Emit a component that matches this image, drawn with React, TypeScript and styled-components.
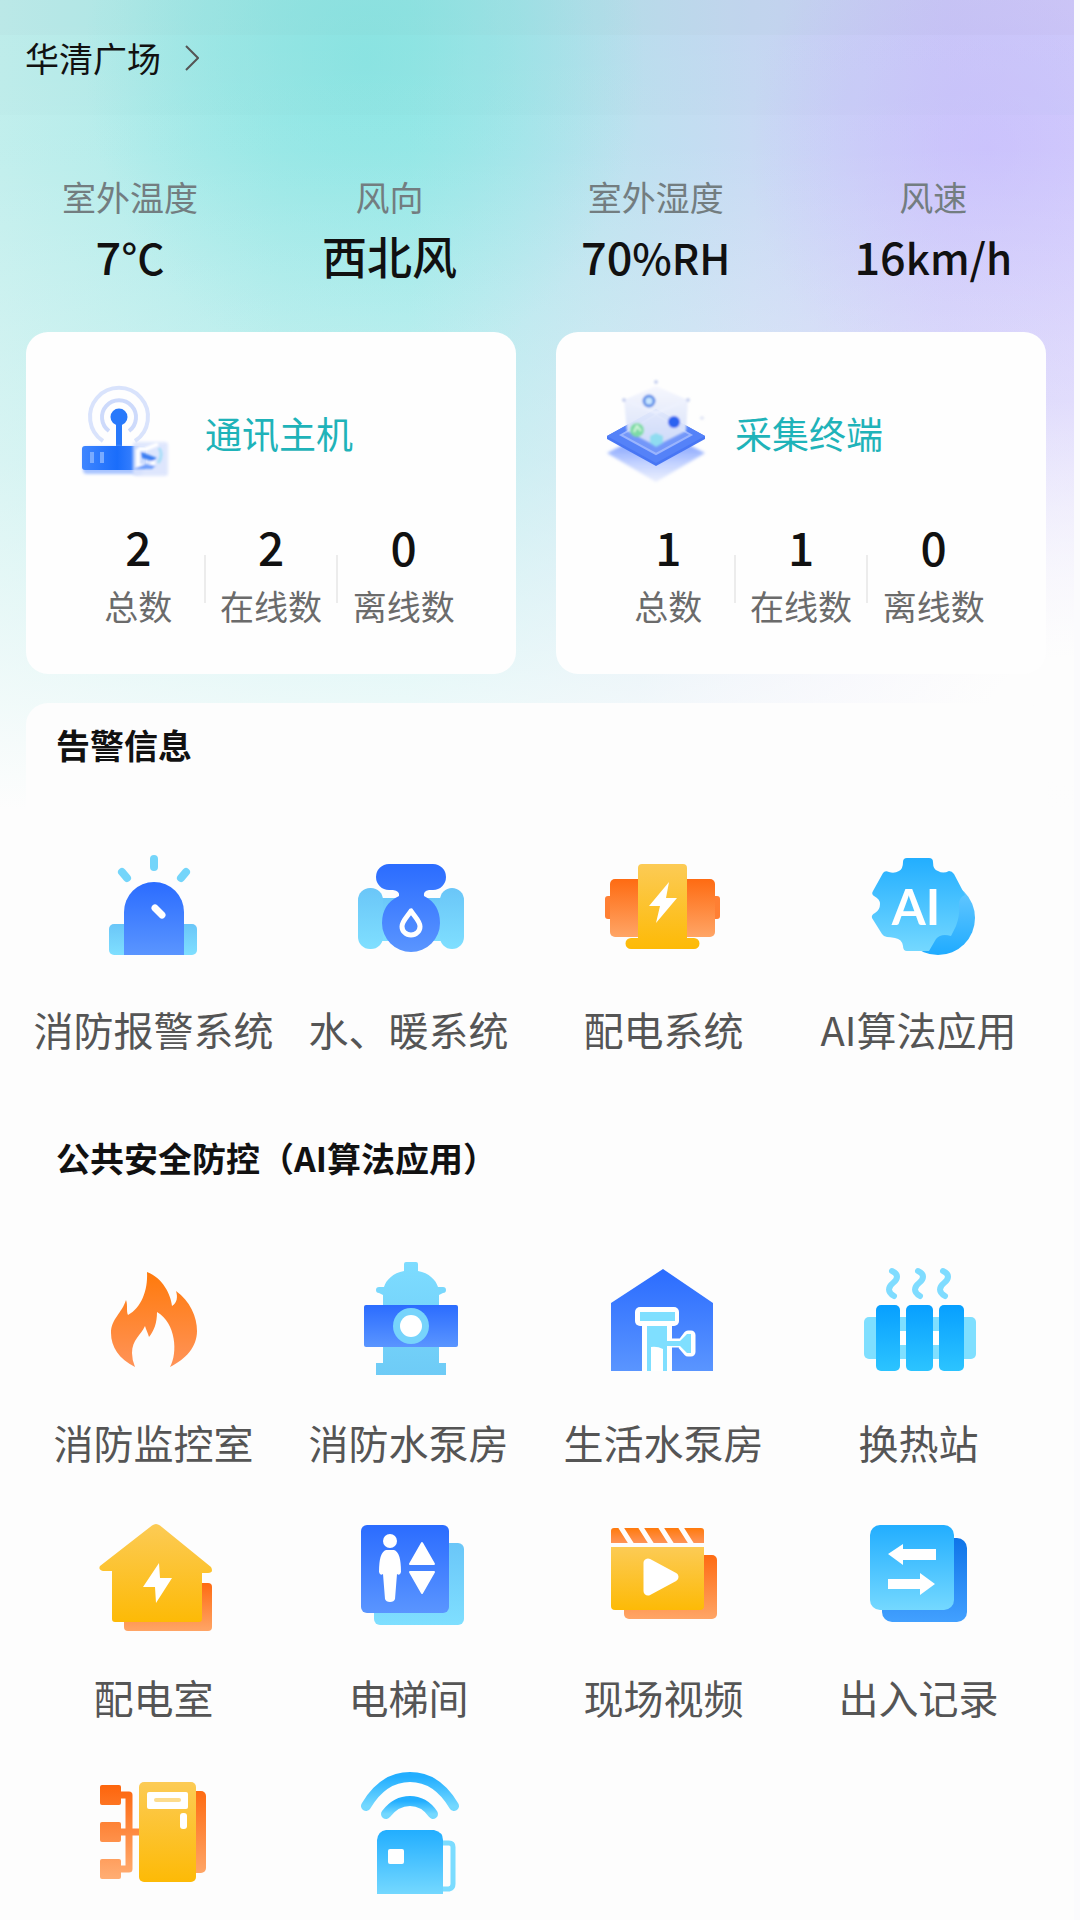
import React from "react";
import styled, { createGlobalStyle } from "styled-components";

const GlobalStyle = createGlobalStyle`
  * { box-sizing: border-box; }
  body {
    margin: 0;
    background: #fdfdfd;
    font-family: "Noto Sans CJK SC", "Noto Sans", sans-serif;
    color: #111;
  }
  button {
    font: inherit;
    color: inherit;
    background: none;
    border: 0;
    padding: 0;
    cursor: pointer;
  }
  h1, h2, p, dl, dd { margin: 0; }
`;

const Page = styled.div`
  min-height: 100vh;
  border-right: 6px solid #fbfbfd;
  background:
    linear-gradient(
      180deg,
      rgba(253, 253, 253, 0) 0,
      rgba(253, 253, 253, 0.04) 150px,
      rgba(253, 253, 253, 0.24) 320px,
      rgba(253, 253, 253, 0.4) 460px,
      rgba(253, 253, 253, 0.64) 600px,
      rgba(253, 253, 253, 0.8) 700px,
      #fdfdfd 810px
    ),
    radial-gradient(440px 320px at 100% 720px, #fdfdfd 20%, rgba(253, 253, 253, 0) 100%),
    radial-gradient(280px 320px at 34% 60px, rgba(132, 228, 226, 0.8), rgba(132, 228, 226, 0) 100%),
    radial-gradient(240px 260px at 92% 150px, rgba(198, 188, 253, 0.7), rgba(198, 188, 253, 0) 100%),
    linear-gradient(90deg, #bfeeec 0, #a4e9e8 26%, #a0e9e9 38%, #b9e1ee 56%, #c6d9f3 70%, #cdcbf9 88%, #d3ccfc 100%);
  background-color: #fdfdfd;
  background-repeat: no-repeat;
  overflow: hidden;
`;

const StatusStrip = styled.div`
  height: 35px;
  background: rgba(120, 130, 140, 0.05);
`;

const Header = styled.header`
  padding: 0 25px 34px;
  background: rgba(120, 130, 140, 0.02);
`;

const PlaceButton = styled.button`
  display: flex;
  align-items: center;
  gap: 24px;
  font-size: 34px;
  line-height: 46px;
`;

const Weather = styled.dl`
  display: flex;
  justify-content: space-around;
  padding: 57px 0 42px;
`;

const WeatherItem = styled.div`
  text-align: center;
`;

const WeatherLabel = styled.dt`
  font-size: 34px;
  line-height: 50px;
  color: #737d80;
`;

const WeatherValue = styled.dd`
  font-size: 45px;
  font-weight: 500;
  line-height: 68px;
`;

const Unit = styled.span`
  font-size: 42px;
  line-height: 1;
`;

const Main = styled.main`
  padding: 0 28px 0 26px;
`;

const Cards = styled.div`
  display: grid;
  grid-template-columns: 1fr 1fr;
  gap: 40px;
  margin-bottom: 29px;
`;

const Card = styled.section`
  padding: 46px 46px 43px;
  border-radius: 22px;
  background: #fefefe;
`;

const CardHead = styled.div`
  display: flex;
  align-items: center;
  gap: 23px;
  margin-bottom: 26px;
`;

const CardTitle = styled.h2`
  font-size: 37px;
  font-weight: 400;
  line-height: 50px;
  color: #1fb3b9;
`;

const Stats = styled.dl`
  display: flex;
`;

const Stat = styled.div`
  flex: 1 1 0;
  display: flex;
  flex-direction: column-reverse;
  gap: 3px;
  text-align: center;
  white-space: nowrap;
`;

const StatDivider = styled.span`
  width: 2px;
  height: 48px;
  margin: 41px -1px 0;
  background: #ececec;
`;

const StatLabel = styled.dt`
  font-size: 34px;
  line-height: 50px;
  color: #6b6b6b;
`;

const StatValue = styled.dd`
  font-size: 46px;
  font-weight: 500;
  line-height: 64px;
`;

const Panel = styled.div`
  padding-top: 17px;
  border-radius: 22px;
  background: #fdfdfd;
`;

const Group = styled.section`
  margin-bottom: 76px;
`;

const GroupTitle = styled.h2`
  padding: 0 30px;
  margin-bottom: 72px;
  font-size: 34px;
  font-weight: 700;
  line-height: 50px;
`;

const Tiles = styled.div`
  display: grid;
  grid-template-columns: repeat(4, 1fr);
  row-gap: 40px;
`;

const Tile = styled.button`
  display: flex;
  flex-direction: column;
  align-items: center;
  gap: 27px;
  min-width: 0;
  white-space: nowrap;
`;

const TileLabel = styled.span`
  font-size: 40px;
  line-height: 56px;
  color: #555;
`;

const Drawing = styled.svg<{ $size: number }>`
  display: block;
  flex: none;
  width: ${(p) => p.$size}px;
  height: ${(p) => p.$size}px;
`;

const HiddenDefs = styled.svg`
  display: block;
  width: 0;
  height: 0;
`;

const gradients: [string, string, string][] = [
  ["blue", "#2b6cff", "#5a95ff"],
  ["cyan", "#6ac6f8", "#7fdfff"],
  ["aqua", "#7ddcff", "#6ecbf6"],
  ["amber", "#fccb55", "#fdba06"],
  ["orange", "#fe6b12", "#ffa566"],
  ["flame", "#ff7a0c", "#ff9358"],
  ["sky", "#22aeff", "#74d8ff"],
  ["orb", "#6dcbff", "#1fabff"],
  ["azure", "#079fff", "#2cc4ff"],
  ["deep", "#0f74e8", "#42a0ff"],
];

const Gradients = () => (
  <HiddenDefs aria-hidden="true">
    <defs>
      {gradients.map(([id, from, to]) => (
        <linearGradient key={id} id={id} x1="0" y1="0" x2="0" y2="1">
          <stop offset="0" stopColor={from} />
          <stop offset="1" stopColor={to} />
        </linearGradient>
      ))}
      <linearGradient id="router" x1="0" y1="0" x2="1" y2="0">
        <stop offset="0" stopColor="#3f86ff" />
        <stop offset="0.55" stopColor="#1a6dfb" />
        <stop offset="1" stopColor="#4d8dff" />
      </linearGradient>
      <linearGradient id="shade" x1="0" y1="0" x2="0" y2="1">
        <stop offset="0.4" stopColor="#7fa0ff" stopOpacity="0.8" />
        <stop offset="1" stopColor="#b9caff" stopOpacity="0.3" />
      </linearGradient>
      <linearGradient id="glass" x1="0" y1="0" x2="0" y2="1">
        <stop offset="0" stopColor="#f6f7fe" />
        <stop offset="1" stopColor="#d3def9" />
      </linearGradient>
      <linearGradient id="ladder" gradientUnits="userSpaceOnUse" x1="0" y1="20" x2="0" y2="114">
        <stop offset="0" stopColor="#fd650c" />
        <stop offset="1" stopColor="#ffae74" />
      </linearGradient>
      <filter id="soft" x="-20%" y="-20%" width="140%" height="140%">
        <feGaussianBlur stdDeviation="1.5" />
      </filter>
      <filter id="haze" x="-20%" y="-20%" width="140%" height="140%">
        <feGaussianBlur stdDeviation="0.8" />
      </filter>
    </defs>
  </HiddenDefs>
);

const Icon = ({ children }: { children: React.ReactNode }) => (
  <Drawing $size={132} viewBox="0 0 132 132" aria-hidden="true">
    {children}
  </Drawing>
);

const AlarmIcon = () => (
  <Icon>
    <g stroke="#74d5fa" strokeWidth="8" strokeLinecap="round">
      <path d="M66 17V25M34 30L39 36M98 30L93 36" />
    </g>
    <rect x="21" y="82" width="88" height="31" rx="5" fill="url(#cyan)" />
    <path d="M36 113V70a30 30 0 0 1 60 0V113z" fill="url(#blue)" />
    <path d="M67 66L74 73" stroke="#fff" strokeWidth="7" strokeLinecap="round" />
  </Icon>
);

const ValveIcon = () => (
  <Icon>
    <rect x="38" y="55" width="60" height="44" fill="url(#cyan)" />
    <path d="M38 50l20-4h20l20 4v6H80L68 52l-12 4H38z" fill="#fdfdfd" />
    <rect x="15" y="46" width="25" height="61" rx="12" fill="url(#cyan)" />
    <rect x="97" y="46" width="24" height="61" rx="12" fill="url(#cyan)" />
    <path
      d="M46 22H90a13 13 0 0 1 0 26H86Q80 49 81 54Q97 62 97 81a29 29 0 0 1-58 0Q39 62 56 54Q57 49 50 48H46a13 13 0 0 1 0-26z"
      fill="url(#blue)"
    />
    <path d="M68 69c-3 5-9 10-9 15.500a9 8.500 0 0 0 18 0c0-5.500-6-10.500-9-15.500z" fill="none" stroke="#fff" strokeWidth="5" strokeLinejoin="round" />
  </Icon>
);

const MotorIcon = () => (
  <Icon>
    <rect x="7" y="54" width="115" height="23" rx="3" fill="#ff7f33" />
    <rect x="12" y="37" width="105" height="58" rx="5" fill="url(#orange)" />
    <path d="M44 22H85a4 4 0 0 1 4 4V96H96a5.500 5.500 0 0 1 0 11H33a5.500 5.500 0 0 1 0-11H40V26a4 4 0 0 1 4-4z" fill="url(#amber)" />
    <path d="M71 40L51 64H62L58 81L79 56H68Z" fill="#fff" />
  </Icon>
);

const AiIcon = () => (
  <Icon>
    <circle cx="85" cy="76" r="37" fill="url(#orb)" />
    <path
      d="M54 16H76Q80 16 80 20Q80 28 85 29Q90 32 96 29Q99 29 101 32L112 53Q105 56 106 64Q107 73 103 84L98 94Q88 91 83 97L76 109H54Q50 109 50 104Q49 97 42 96Q37 95 34 95Q31 95 29 92L19 76Q18 73 22 71Q27 68 27 62Q27 57 21 54Q18 52 20 49L30 31Q32 28 36 30Q41 32 46 29Q50 27 50 20Q50 16 54 16Z"
      fill="url(#sky)"
    />
    <text x="63" y="83" textAnchor="middle" fontFamily="Lato, sans-serif" fontWeight="700" fontSize="49" fill="#fff">
      AI
    </text>
  </Icon>
);

const FlameIcon = () => (
  <Icon>
    <path
      d="M59 17C75 23 83 40 84 51C89 48 90 42 88 36C102 46 109 62 109 76C109 92 98 104 82 112C90 98 88 68 69 57C69 68 66 76 61 82C60 78 58 75 57 71C53 80 44 85 44 98Q44 105 47 112C31 104 23 92 23 78C23 64 34 58 38 45C40 50 38 56 40 60C53 53 60 36 59 17Z"
      fill="url(#flame)"
    />
  </Icon>
);

const HydrantIcon = () => (
  <Icon>
    <path
      d="M63 7H73a2 2 0 0 1 2 2V16C86 18 93 25 95 32H100a3 3 0 0 1 0 6L96 40V108H103V120H33V108H40V40L36 38a3 3 0 0 1 0-6H41C43 25 50 18 61 16V9a2 2 0 0 1 2-2z"
      fill="url(#aqua)"
    />
    <rect x="21" y="50" width="94" height="42" rx="2" fill="url(#blue)" />
    <circle cx="68" cy="71" r="18" fill="#77d4fb" />
    <circle cx="68" cy="71" r="11" fill="#fff" />
  </Icon>
);

const PumpHouseIcon = () => (
  <Icon>
    <path d="M65 14L115 48V116H13V48Z" fill="url(#blue)" />
    <rect x="37" y="52" width="44" height="19" rx="5" fill="#fff" />
    <rect x="44" y="68" width="30" height="48" fill="#fff" />
    <path d="M70 88H84L90 80H93V97H90L84 90" fill="#fff" stroke="#fff" strokeWidth="9" strokeLinejoin="round" />
    <rect x="42" y="57" width="35" height="9" fill="#7fdfff" />
    <rect x="49" y="71" width="20" height="45" fill="#7fdfff" />
    <path d="M68 86H82L89 79H93V98H89L82 91H68Z" fill="#7fdfff" />
    <path d="M53 92Q59 91 65 94V116H53Z" fill="#fff" />
  </Icon>
);

const HeatIcon = () => (
  <Icon>
    {[0, 26, 51].map((x) => (
      <path key={x} transform={`translate(${x} 0)`} d="M39 16c7 3 6 8 1 12s-6 9 1 13" fill="none" stroke="#7fdcff" strokeWidth="6" strokeLinecap="round" />
    ))}
    <rect x="11" y="62" width="112" height="42" rx="5" fill="#7fdfff" />
    <rect x="40" y="76" width="54" height="14" fill="#fff" />
    <rect x="23" y="50" width="24" height="66" rx="5" fill="url(#azure)" />
    <rect x="53" y="50" width="27" height="66" rx="5" fill="url(#azure)" />
    <rect x="86" y="50" width="25" height="66" rx="5" fill="url(#azure)" />
  </Icon>
);

const PowerHouseIcon = () => (
  <Icon>
    <rect x="36" y="73" width="88" height="48" rx="4" fill="url(#orange)" />
    <path d="M64 15.500Q68 12.500 72 15.500L123 57Q126 63 120 63H114V109Q114 112 111 112H27Q24 112 24 109V61H15Q10 60 12 56Z" fill="url(#amber)" />
    <path d="M71 53L55 77H67L68 93L84 68H72Z" fill="#fff" />
  </Icon>
);

const ElevatorIcon = () => (
  <Icon>
    <rect x="31" y="33" width="90" height="82" rx="6" fill="url(#cyan)" />
    <rect x="18" y="15" width="88" height="88" rx="6" fill="url(#blue)" />
    <circle cx="47" cy="31" r="7" fill="#fff" />
    <path d="M43 40H51Q58 42 58 62Q57 66 54 64L52 89Q51 92 47 92Q43 92 42 89L40 64Q37 66 36 62Q36 42 43 40Z" fill="#fff" />
    <path d="M79 33L91 54H67ZM67 62H91L79 83Z" fill="#fff" stroke="#fff" strokeWidth="2" strokeLinejoin="round" />
  </Icon>
);

const VideoIcon = () => (
  <Icon>
    <rect x="26" y="45" width="93" height="64" rx="5" fill="url(#orange)" />
    <path d="M16 18H103a3 3 0 0 1 3 3V33H13V21a3 3 0 0 1 3-3z" fill="url(#flame)" />
    <path d="M22 16L34 35M42 16L54 35M62 16L74 35M82 16L94 35" stroke="#fdfdfd" strokeWidth="5" />
    <rect x="13" y="33" width="94" height="4" fill="#fdfdfd" />
    <path d="M13 37H106V96a4 4 0 0 1-4 4H17a4 4 0 0 1-4-4z" fill="url(#amber)" />
    <path d="M50 53V81L76 67Z" fill="#fff" stroke="#fff" strokeWidth="9" strokeLinejoin="round" />
  </Icon>
);

const RecordIcon = () => (
  <Icon>
    <rect x="29" y="28" width="85" height="84" rx="10" fill="url(#deep)" />
    <rect x="17" y="15" width="84" height="85" rx="10" fill="url(#sky)" />
    <path d="M35 44L50 34V39H83V50H50V55ZM82 74L67 63V69H35V79H67V85Z" fill="#fff" />
  </Icon>
);

const CabinetIcon = () => (
  <Icon>
    <path d="M30 30H41V104H30M30 67H54" fill="none" stroke="url(#ladder)" strokeWidth="7" strokeLinejoin="round" />
    {[20, 57, 94].map((y) => (
      <rect key={y} x="12" y={y} width="21" height="20" rx="2" fill="url(#ladder)" />
    ))}
    <rect x="90" y="26" width="28" height="82" rx="5" fill="url(#orange)" />
    <rect x="51" y="17" width="57" height="100" rx="5" fill="url(#amber)" />
    <rect x="59" y="27" width="41" height="17" rx="2" fill="#fff" />
    <rect x="66" y="33" width="27" height="4" rx="2" fill="#fddc8c" />
    <rect x="92" y="48" width="7" height="16" rx="3" fill="#fff" />
  </Icon>
);

const SensorIcon = () => (
  <Icon>
    <path d="M23 41Q40 12 67 12T111 41" fill="none" stroke="url(#sky)" strokeWidth="10" strokeLinecap="round" />
    <path d="M43 49Q53 36 67 36T90 49" fill="none" stroke="url(#sky)" strokeWidth="10" strokeLinecap="round" />
    <path d="M99 78H106Q110 78 110 82V119Q110 123 106 124H99" fill="none" stroke="#7bdcff" strokeWidth="5" />
    <path d="M43 65H91Q100 67 100 75V129H34V75Q35 66 43 65Z" fill="url(#sky)" />
    <rect x="45" y="84" width="16" height="15" rx="2" fill="#fff" />
  </Icon>
);

const RouterIcon = () => (
  <Drawing $size={110} viewBox="0 0 110 110" aria-hidden="true">
    <g fill="none" strokeWidth="4">
      <path d="M31 63A29 29 0 1 1 63 63" stroke="#d9e3fc" />
      <path d="M37 53A17 17 0 1 1 57 53" stroke="#cddafb" />
    </g>
    <circle cx="47" cy="39" r="8.500" fill="#2879fb" />
    <rect x="44" y="44" width="6" height="26" fill="#2879fb" />
    <rect x="11" y="69" width="60" height="27" rx="4" fill="#a8c4ff" filter="url(#soft)" />
    <rect x="10" y="68" width="64" height="24" rx="3" fill="url(#router)" />
    <g fill="#79abff">
      <rect x="18" y="74" width="4" height="11" />
      <rect x="28" y="74" width="4" height="11" />
    </g>
    <rect x="61" y="64" width="35" height="34" rx="3" fill="#dbe4fd" opacity="0.9" filter="url(#soft)" />
    <g filter="url(#haze)">
      <path d="M66 71V88H81V83M66 71H74L86 66" fill="none" stroke="#fff" strokeWidth="4" />
      <path d="M69 74L85 80L80 83L70 80Z" fill="#3b7df2" />
      <path d="M61 91L74 86L84 88L80 91H61Z" fill="#6f9ffb" />
      <path d="M87 70Q92 77 86 85" fill="none" stroke="#a9def8" strokeWidth="3" />
    </g>
  </Drawing>
);

const TerminalIcon = () => (
  <Drawing $size={110} viewBox="0 0 110 110" aria-hidden="true">
    <path d="M5 75L54 50L103 75L54 104Z" fill="url(#shade)" filter="url(#soft)" />
    <path d="M5 58L54 31L103 58V61L54 88L5 61Z" fill="#4876f4" />
    <path d="M5 58L54 31L103 58L54 85Z" fill="#5582f8" />
    <path d="M19 57L54 37L89 57L54 76Z" fill="#7397f9" stroke="#9ab4fd" strokeWidth="2" />
    <g filter="url(#haze)">
      <path d="M54 8L86 22L84 53L54 68L25 53L22 22Z" fill="url(#glass)" opacity="0.94" />
      <path d="M22 22L54 35L86 22" fill="none" stroke="#eef2fe" strokeWidth="2" />
      <g fill="#c9d2f0">
        <circle cx="54" cy="4" r="2" />
        <circle cx="22" cy="22" r="2" />
        <circle cx="86" cy="22" r="2" />
        <circle cx="100" cy="40" r="2" opacity="0.5" />
      </g>
      <circle cx="47" cy="23" r="5" fill="#c7e6ff" stroke="#5e8fe8" strokeWidth="3" />
      <ellipse cx="72" cy="44" rx="6" ry="6" fill="#2c62f0" />
      <circle cx="35" cy="52" r="7" fill="#7edba6" />
      <path d="M32 54L35 48L39 53" fill="none" stroke="#d6f8df" strokeWidth="2" />
      <path d="M48 58L54 55L61 58V65L54 69L48 65Z" fill="#8fdcf0" />
    </g>
  </Drawing>
);

const weather = [
  { label: "室外温度", value: "7", unit: "°C" },
  { label: "风向", value: "西北风", unit: "" },
  { label: "室外湿度", value: "70", unit: "%RH" },
  { label: "风速", value: "16", unit: "km/h" },
];

const devices = [
  { title: "通讯主机", Art: RouterIcon, counts: [2, 2, 0] },
  { title: "采集终端", Art: TerminalIcon, counts: [1, 1, 0] },
];

const countLabels = ["总数", "在线数", "离线数"];

type TileData = { name: string; Art: () => React.JSX.Element; bare?: boolean };

const groups: { title: string; tiles: TileData[] }[] = [
  {
    title: "告警信息",
    tiles: [
      { name: "消防报警系统", Art: AlarmIcon },
      { name: "水、暖系统", Art: ValveIcon },
      { name: "配电系统", Art: MotorIcon },
      { name: "AI算法应用", Art: AiIcon },
    ],
  },
  {
    title: "公共安全防控（AI算法应用）",
    tiles: [
      { name: "消防监控室", Art: FlameIcon },
      { name: "消防水泵房", Art: HydrantIcon },
      { name: "生活水泵房", Art: PumpHouseIcon },
      { name: "换热站", Art: HeatIcon },
      { name: "配电室", Art: PowerHouseIcon },
      { name: "电梯间", Art: ElevatorIcon },
      { name: "现场视频", Art: VideoIcon },
      { name: "出入记录", Art: RecordIcon },
      { name: "配电柜", Art: CabinetIcon, bare: true },
      { name: "无线传感", Art: SensorIcon, bare: true },
    ],
  },
];

const LastGroup = styled(Group)`
  margin-bottom: 0;
`;

export default function App() {
  return (
    <>
      <GlobalStyle />
      <Gradients />
      <Page>
        <StatusStrip />
        <Header>
          <PlaceButton type="button">
            华清广场
            <svg width="14" height="26" viewBox="0 0 14 26" fill="none" stroke="#555" strokeWidth="2" aria-hidden="true">
              <path d="M1 1L13 13L1 25" />
            </svg>
          </PlaceButton>
        </Header>
        <Weather>
          {weather.map((w) => (
            <WeatherItem key={w.label}>
              <WeatherLabel>{w.label}</WeatherLabel>
              <WeatherValue>
                {w.value}
                {w.unit && <Unit>{w.unit}</Unit>}
              </WeatherValue>
            </WeatherItem>
          ))}
        </Weather>
        <Main>
          <Cards>
            {devices.map(({ title, Art, counts }) => (
              <Card key={title}>
                <CardHead>
                  <Art />
                  <CardTitle>{title}</CardTitle>
                </CardHead>
                <Stats>
                  {counts.map((count, i) => (
                    <React.Fragment key={countLabels[i]}>
                      {i > 0 && <StatDivider />}
                      <Stat>
                        <StatLabel>{countLabels[i]}</StatLabel>
                        <StatValue>{count}</StatValue>
                      </Stat>
                    </React.Fragment>
                  ))}
                </Stats>
              </Card>
            ))}
          </Cards>
          <Panel>
            {groups.map(({ title, tiles }, i) => {
              const Wrap = i === groups.length - 1 ? LastGroup : Group;
              return (
                <Wrap key={title}>
                  <GroupTitle>{title}</GroupTitle>
                  <Tiles>
                    {tiles.map(({ name, Art, bare }) => (
                      <Tile key={name} type="button" aria-label={bare ? name : undefined}>
                        <Art />
                        {!bare && <TileLabel>{name}</TileLabel>}
                      </Tile>
                    ))}
                  </Tiles>
                </Wrap>
              );
            })}
          </Panel>
        </Main>
      </Page>
    </>
  );
}
